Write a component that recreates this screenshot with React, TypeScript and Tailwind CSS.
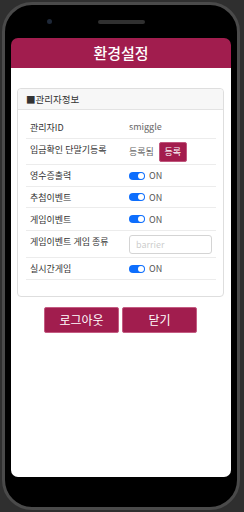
import React from 'react';

const font = { fontFamily: '"Noto Sans CJK KR", "Noto Sans", sans-serif' };

function Toggle() {
  return (
    <div className="flex items-center gap-[4px]">
      <div className="w-[16px] h-[8px] rounded-full bg-[#0d6efd] flex items-center justify-end pr-[1px]">
        <div className="w-[6px] h-[6px] rounded-full bg-white" />
      </div>
      <span className="text-[9px] leading-none text-[#555]">ON</span>
    </div>
  );
}

function Row({
  label,
  h,
  top,
  children,
}: {
  label: string;
  h: string;
  top?: boolean;
  children: React.ReactNode;
}) {
  return (
    <div className={`flex border-b border-[#ececec] ${h}`}>
      <div
        className={`w-[103px] pl-[4px] text-[9px] leading-[11px] text-[#333] flex ${
          top ? 'items-start pt-[5px]' : 'items-center'
        }`}
      >
        {label}
      </div>
      <div className="flex-1 flex items-center">{children}</div>
    </div>
  );
}

export default function App() {
  return (
    <div className="w-[244px] h-[512px] bg-[#2f2f2f] overflow-hidden" style={font}>
      <div className="ml-[2px] mt-[2px] w-[238px] h-[508px] rounded-[30px] bg-black border-[3px] border-[#4a4a4a] flex flex-col px-[6px]">
        <div className="h-[33px] shrink-0 flex items-center pl-[36px] gap-[46px]">
          <div className="w-[5px] h-[5px] rounded-full bg-[#1e2838]" />
          <div className="w-[47px] h-[4px] rounded-full bg-[#303030]" />
        </div>

        <div className="h-[439px] flex flex-col rounded-[7px] overflow-hidden">
          <div className="h-[30px] shrink-0 bg-[#a11d4e] flex items-center justify-center text-white text-[15px] font-medium">
            환경설정
          </div>
          <div className="flex-1 bg-white pt-[20px] pl-[6px] pr-[7px]">
            <div className="border border-[#dedede] rounded-[4px]">
              <div className="h-[21px] bg-[#f7f7f7] border-b border-[#e3e3e3] flex items-center pl-[8px] text-[9.5px] text-[#333] rounded-t-[4px]">
                ■관리자정보
              </div>
              <div className="pl-[8px] pr-[7px] pt-[6px] pb-[16px]">
                <Row label="관리자ID" h="h-[23px]">
                  <span className="text-[9px] text-[#666]">smiggle</span>
                </Row>
                <Row label="입금확인 단말기등록" h="h-[26px]" top>
                  <span className="text-[9px] text-[#666]">등록됨</span>
                  <button
                    type="button"
                    className="ml-[5px] w-[28px] h-[20px] rounded-[2px] bg-[#a31c4d] border border-[#c0567c] text-white text-[9px] leading-none"
                  >
                    등록
                  </button>
                </Row>
                <Row label="영수증출력" h="h-[22px]">
                  <Toggle />
                </Row>
                <Row label="추첨이벤트" h="h-[21px]">
                  <Toggle />
                </Row>
                <Row label="게임이벤트" h="h-[23px]">
                  <Toggle />
                </Row>
                <Row label="게임이벤트 게임 종류" h="h-[27px]" top>
                  <input
                    className="w-[83px] h-[19px] border border-[#d4d4d4] rounded-[3px] px-[6px] text-[9px] text-[#999] outline-none"
                    style={font}
                    placeholder="barrier"
                  />
                </Row>
                <Row label="실시간게임" h="h-[22px]">
                  <Toggle />
                </Row>
              </div>
            </div>

            <div className="mt-[10px] flex justify-center gap-[3px]">
              <button
                type="button"
                className="w-[75px] h-[26px] rounded-[2px] bg-[#a11d4e] border border-[#c45c82] text-white text-[12px]"
                style={font}
              >
                로그아웃
              </button>
              <button
                type="button"
                className="w-[75px] h-[26px] rounded-[2px] bg-[#a11d4e] border border-[#c45c82] text-white text-[12px]"
                style={font}
              >
                닫기
              </button>
            </div>
          </div>
        </div>
      </div>
    </div>
  );
}
